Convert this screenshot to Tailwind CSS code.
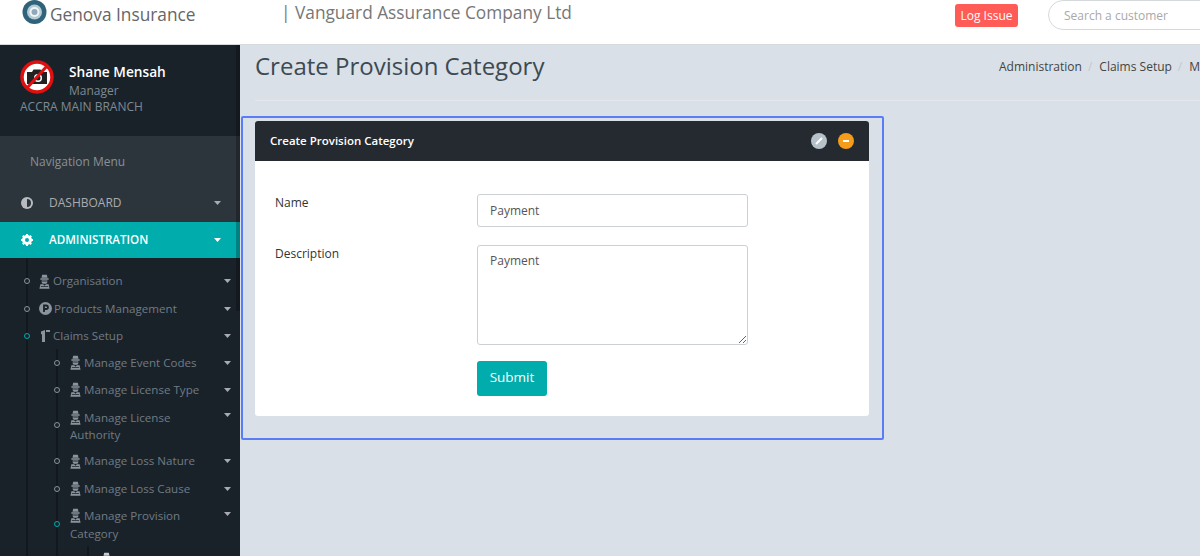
<!DOCTYPE html>
<html lang="en">
<head>
  <meta charset="UTF-8" />
  <title>Create Provision Category</title>
  <script src="https://cdn.jsdelivr.net/npm/@tailwindcss/browser@4"></script>
</head>
<body class="h-[556px] overflow-hidden bg-[#d9e0e7] font-['Open_Sans',sans-serif] text-[12px] text-[#333]">

  <svg class="hidden">
    <symbol id="spy" viewBox="0 0 12 16">
      <path fill="currentColor" d="M3.500 0.500h5l0.800 3.500H2.700zM1.500 4.500h9V6h-9zM3 6.500h6V9l-1 1.500H4L3 9zM1.500 11h3L6 12.500 7.500 11h3l1 5H0.500z"/>
      <path fill="#1a2229" d="M3.500 7.300h5v0.800h-5zM2 13h8v0.700H2z"/>
    </symbol>
    <symbol id="caret" viewBox="0 0 7 4">
      <path fill="currentColor" d="M0 0h7L3.500 4z"/>
    </symbol>
  </svg>

  <!-- top bar -->
  <header class="flex h-[45px] items-start overflow-hidden border-b border-[#d5d9dc] bg-white">
    <svg class="ml-[22px] mt-0 h-[24px] w-[25px] shrink-0" viewBox="0 0 25 24">
      <circle cx="12.500" cy="12" r="12" fill="#2f6379"/>
      <circle cx="12.500" cy="12" r="7.500" fill="#b5cbd6"/>
      <circle cx="12.500" cy="12" r="5" fill="#f0f4f6"/>
      <circle cx="12.500" cy="12" r="3" fill="#8fa9b6"/>
    </svg>
    <span class="ml-[3px] mt-[2px] w-[231px] shrink-0 text-[17.3px] leading-[26px] text-[#666]">Genova Insurance</span>
    <span class="w-[674px] shrink-0 text-[17.3px] leading-[25px] text-[#777]">| Vanguard Assurance Company Ltd</span>
    <button class="mt-[4px] flex h-[23px] w-[63px] shrink-0 items-center justify-center rounded-[3px] bg-[#ff5b57] text-white">Log Issue</button>
    <div class="ml-[30px] flex h-[30px] w-[170px] shrink-0 items-center rounded-l-full border border-[#d5d9dc] pl-[15px] pt-[1px] text-[#a9a9a9]">Search a customer</div>
  </header>

  <div class="flex h-[511px]">
    <!-- sidebar -->
    <aside class="relative h-full w-[240px] shrink-0 overflow-hidden bg-[#1a2229] text-[11.6px] text-[#6f7b85]">
      <div class="absolute right-0 top-0 h-[266px] w-[4px] bg-black/25"></div>

      <div class="h-[91px] px-[20px] pt-[15px]">
        <div class="flex">
          <svg class="h-[34px] w-[34px]" viewBox="0 0 34 34">
            <circle cx="17" cy="17" r="15" fill="#fff" stroke="#e01010" stroke-width="3.500"/>
            <path fill="#222" d="M7 12h5l1.500-2.500h7L22 12h5v12H7z"/>
            <circle cx="18" cy="18" r="4" fill="#fff"/>
            <circle cx="18" cy="18" r="2.500" fill="#222"/>
            <path stroke="#e01010" stroke-width="3" d="M27 6L7 28"/>
          </svg>
          <div class="ml-[15px]">
            <div class="text-[13.7px] font-semibold leading-[24px] text-white">Shane Mensah</div>
            <div class="text-[12px] leading-[14px] text-[#7e8a93]">Manager</div>
          </div>
        </div>
        <div class="mt-[1px] text-[12px] leading-[16px] text-[#7e8a93]">ACCRA MAIN BRANCH</div>
      </div>

      <div class="h-[86px] bg-[#2d353c] text-[12px] text-[#a8acb1]">
        <div class="px-[30px] pt-[18px] leading-[16px] text-[#889097]">Navigation Menu</div>
        <div class="mt-[15px] flex h-[36px] items-center pl-[21px] pr-[19px]">
          <svg class="h-[12px] w-[12px]" viewBox="0 0 12 12">
            <circle cx="6" cy="6" r="6" fill="#b8bcc0"/>
            <path fill="#2d353c" d="M6 2a4 4 0 0 1 0 8z"/>
          </svg>
          <span class="ml-[16px] flex-1">DASHBOARD</span>
          <svg class="h-[4px] w-[7px]"><use href="#caret"/></svg>
        </div>
      </div>

      <div class="flex h-[36px] items-center bg-[#00acac] pl-[21px] pr-[19px] font-semibold text-white">
        <svg class="h-[12px] w-[12px]" viewBox="0 0 12 12">
          <circle cx="6" cy="6" r="3.500" fill="none" stroke="#fff" stroke-width="3"/>
          <path stroke="#fff" stroke-width="2" d="M6 0v2M6 10v2M0 6h2M10 6h2M1.800 1.800l1.400 1.400M8.800 8.800l1.400 1.400M1.800 10.200l1.400-1.400M8.800 3.200l1.400-1.400"/>
        </svg>
        <span class="ml-[16px] flex-1">ADMINISTRATION</span>
        <svg class="h-[4px] w-[7px]"><use href="#caret"/></svg>
      </div>

      <!-- tree -->
      <div class="ml-[26px] border-l-2 border-[#12181d] pt-[9px] pr-[9px]">
        <div class="relative flex h-[28px] items-center pl-[11px]">
          <i class="absolute left-[-4px] top-[11px] h-[6px] w-[6px] rounded-full border border-[#8a949c] bg-[#1a2229]"></i>
          <svg class="h-[15px] w-[11px] text-[#8a949c]"><use href="#spy"/></svg>
          <span class="ml-[3px] flex-1">Organisation</span>
          <svg class="h-[4px] w-[7px] text-[#a8acb1]"><use href="#caret"/></svg>
        </div>
        <div class="relative flex h-[27px] items-center pl-[11px]">
          <i class="absolute left-[-4px] top-[11px] h-[6px] w-[6px] rounded-full border border-[#8a949c] bg-[#1a2229]"></i>
          <svg class="h-[13px] w-[13px]" viewBox="0 0 13 13">
            <circle cx="6.500" cy="6.500" r="6.500" fill="#8a949c"/>
            <path fill="none" stroke="#1a2229" stroke-width="1.800" d="M5 10V3.500h2.200a1.700 1.700 0 0 1 0 3.500H5"/>
          </svg>
          <span class="ml-[2px] flex-1">Products Management</span>
          <svg class="h-[4px] w-[7px] text-[#a8acb1]"><use href="#caret"/></svg>
        </div>
        <div class="relative flex h-[27px] items-center pl-[13px]">
          <i class="absolute left-[-4px] top-[11px] h-[6px] w-[6px] rounded-full border border-[#00acac] bg-[#1a2229]"></i>
          <svg class="h-[12px] w-[9px]" viewBox="0 0 9 12">
            <path fill="#8a949c" d="M0 1.500L4 0v12H1V4.500L0 4zM5 0h4v2H5z"/>
          </svg>
          <span class="ml-[3px] flex-1">Claims Setup</span>
          <svg class="h-[4px] w-[7px] text-[#a8acb1]"><use href="#caret"/></svg>
        </div>

        <div class="ml-[28px] border-l-2 border-[#12181d]">
          <div class="relative flex h-[27px] items-center pl-[12px]">
            <i class="absolute left-[-4px] top-[11px] h-[6px] w-[6px] rounded-full border border-[#8a949c] bg-[#1a2229]"></i>
            <svg class="h-[15px] w-[11px] text-[#8a949c]"><use href="#spy"/></svg>
            <span class="ml-[3px] flex-1">Manage Event Codes</span>
            <svg class="h-[4px] w-[7px] text-[#a8acb1]"><use href="#caret"/></svg>
          </div>
          <div class="relative flex h-[27px] items-center pl-[12px]">
            <i class="absolute left-[-4px] top-[11px] h-[6px] w-[6px] rounded-full border border-[#8a949c] bg-[#1a2229]"></i>
            <svg class="h-[15px] w-[11px] text-[#8a949c]"><use href="#spy"/></svg>
            <span class="ml-[3px] flex-1">Manage License Type</span>
            <svg class="h-[4px] w-[7px] text-[#a8acb1]"><use href="#caret"/></svg>
          </div>
          <div class="relative h-[44px] pl-[12px] pt-[6px] leading-[17px]">
            <i class="absolute left-[-4px] top-[19px] h-[6px] w-[6px] rounded-full border border-[#8a949c] bg-[#1a2229]"></i>
            <svg class="absolute right-0 top-[10px] h-[4px] w-[7px] text-[#a8acb1]"><use href="#caret"/></svg>
            <svg class="inline-block h-[15px] w-[11px] align-[-3px] text-[#8a949c]"><use href="#spy"/></svg>
            Manage License<br>Authority
          </div>
          <div class="relative flex h-[28px] items-center pl-[12px]">
            <i class="absolute left-[-4px] top-[11px] h-[6px] w-[6px] rounded-full border border-[#8a949c] bg-[#1a2229]"></i>
            <svg class="h-[15px] w-[11px] text-[#8a949c]"><use href="#spy"/></svg>
            <span class="ml-[3px] flex-1">Manage Loss Nature</span>
            <svg class="h-[4px] w-[7px] text-[#a8acb1]"><use href="#caret"/></svg>
          </div>
          <div class="relative flex h-[27px] items-center pl-[12px]">
            <i class="absolute left-[-4px] top-[11px] h-[6px] w-[6px] rounded-full border border-[#8a949c] bg-[#1a2229]"></i>
            <svg class="h-[15px] w-[11px] text-[#8a949c]"><use href="#spy"/></svg>
            <span class="ml-[3px] flex-1">Manage Loss Cause</span>
            <svg class="h-[4px] w-[7px] text-[#a8acb1]"><use href="#caret"/></svg>
          </div>
          <div class="relative h-[44px] pl-[12px] pt-[5px] leading-[18px]">
            <i class="absolute left-[-4px] top-[19px] h-[6px] w-[6px] rounded-full border border-[#00acac] bg-[#1a2229]"></i>
            <svg class="absolute right-0 top-[10px] h-[4px] w-[7px] text-[#a8acb1]"><use href="#caret"/></svg>
            <svg class="inline-block h-[15px] w-[11px] align-[-3px] text-[#8a949c]"><use href="#spy"/></svg>
            Manage Provision<br>Category
          </div>
          <div class="ml-[29px] h-[40px] border-l-2 border-[#12181d] pl-[12px] pt-[6px] leading-[14px]">
            <svg class="inline-block h-[15px] w-[11px] align-[-3px] text-[#c8ccd0]"><use href="#spy"/></svg>
            Create Provision
          </div>
        </div>
      </div>
    </aside>

    <!-- content -->
    <main class="min-w-0 flex-1 overflow-hidden">
      <div class="ml-[15px] flex h-[56px] items-start border-b border-[#e4e8ec]">
        <h1 class="w-[744px] shrink-0 pt-[2px] text-[24px] leading-[38px] text-[#3c4a54]">Create Provision Category</h1>
        <nav class="flex shrink-0 gap-[6px] whitespace-nowrap pt-[13px] leading-[18px] text-[#444]">
          <span>Administration</span><span class="text-[#c3c9ce]">/</span>
          <span class="ml-[1px]">Claims Setup</span><span class="text-[#c3c9ce]">/</span>
          <span class="ml-[1px]">Manage Provision Category</span>
        </nav>
      </div>

      <div class="ml-[1px] mt-[15px] h-[324px] w-[643px] rounded-[2px] border-2 border-[#5b7cf7] px-[12px] pt-[3px]">
        <section class="h-[295px] w-[614px] overflow-hidden rounded-[3px] bg-white">
          <div class="flex h-[40px] items-center bg-[#242a30] pl-[15px] pr-[15px] text-[11.5px] font-semibold text-white">
            <span class="flex-1">Create Provision Category</span>
            <svg class="h-[16px] w-[16px]" viewBox="0 0 16 16">
              <circle cx="8" cy="8" r="8" fill="#b6c2c9"/>
              <path stroke="#fff" stroke-width="2" d="M5 11l6-6"/>
            </svg>
            <svg class="ml-[11px] h-[16px] w-[16px]" viewBox="0 0 16 16">
              <circle cx="8" cy="8" r="8" fill="#f59c1a"/>
              <path stroke="#fff" stroke-width="2" d="M5 8h6"/>
            </svg>
          </div>
          <form class="pl-[20px] pt-[33px]">
            <div class="flex h-[51px]">
              <label class="w-[202px] pt-[1px] leading-[16px]">Name</label>
              <input class="h-[33px] w-[271px] rounded-[3px] border border-[#ccd0d4] px-[12px] text-[12px] text-[#555]" value="Payment" />
            </div>
            <div class="flex h-[116px]">
              <label class="w-[202px] pt-[1px] leading-[16px]">Description</label>
              <textarea class="h-[100px] w-[271px] rounded-[3px] border border-[#ccd0d4] px-[12px] py-[6px] text-[12px] leading-[17px] text-[#555]">Payment</textarea>
            </div>
            <button type="button" class="ml-[202px] h-[35px] w-[70px] rounded-[3px] bg-[#00acac] pb-[2px] text-[13.5px] text-white">Submit</button>
          </form>
        </section>
      </div>
    </main>
  </div>

</body>
</html>
